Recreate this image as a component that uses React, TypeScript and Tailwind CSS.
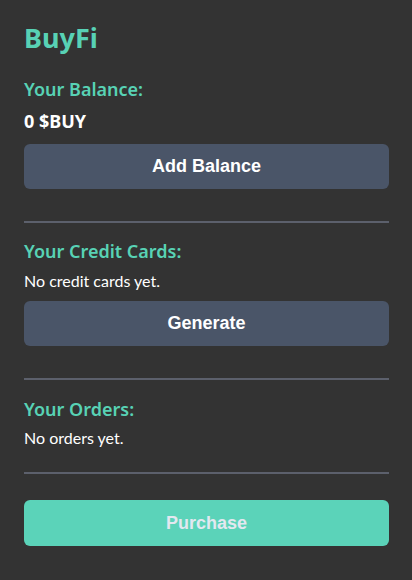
export default function App() {
  const buttonClass =
    "block w-full h-[45px] rounded-md bg-[#4a5568] text-white text-[18px] font-bold font-['Liberation_Sans',Arial,sans-serif]"

  return (
    <div className="min-h-screen bg-[#333333] pl-6 pr-[23px] pt-5 pb-8 font-['Noto_Sans',sans-serif] text-white">
      <h1 className="text-[27px] leading-9 font-bold text-[#58d2b5]">BuyFi</h1>

      <h3 className="mt-[21px] text-[18px] leading-6 font-semibold text-[#58d2b5]">Your Balance:</h3>
      <p className="mt-2 text-[18px] leading-6 font-bold">0 $BUY</p>
      <button className={"mt-[11px] " + buttonClass}>Add Balance</button>

      <div className="mt-8 h-[2px] bg-[#5c606c]" />

      <h3 className="mt-4 text-[18px] leading-6 font-semibold text-[#58d2b5]">Your Credit Cards:</h3>
      <p className="mt-[6px] text-[16px] leading-6 font-['Lato',sans-serif]">No credit cards yet.</p>
      <button className={"mt-2 " + buttonClass}>Generate</button>

      <div className="mt-8 h-[2px] bg-[#5c606c]" />

      <h3 className="mt-[17px] text-[18px] leading-6 font-semibold text-[#58d2b5]">Your Orders:</h3>
      <p className="mt-[5px] text-[16px] leading-6 font-['Lato',sans-serif]">No orders yet.</p>

      <div className="mt-[22px] h-[2px] bg-[#5c606c]" />

      <button className="mt-[26px] block w-full h-[46px] rounded-md bg-[#5bd3b9] text-[#e2e8f0] text-[18px] font-bold font-['Liberation_Sans',Arial,sans-serif]">
        Purchase
      </button>
    </div>
  )
}
